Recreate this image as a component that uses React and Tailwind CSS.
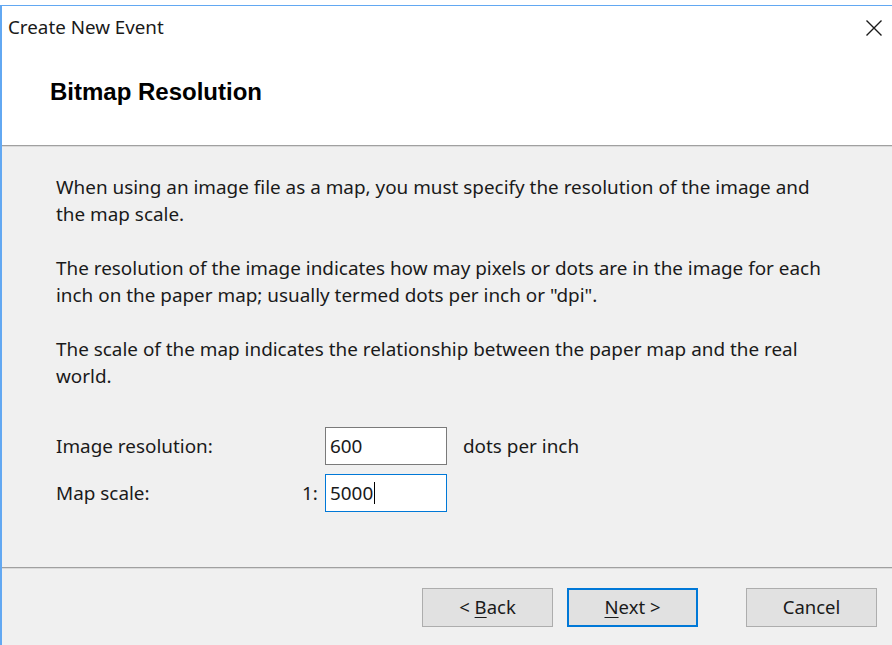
import React from "react";

const ui = { fontFamily: '"Noto Sans", "Open Sans", sans-serif' };
const heading = { fontFamily: '"Liberation Sans", Arial, sans-serif' };

function WizardButton({ children, primary }) {
  return (
    <button
      type="button"
      className={
        primary
          ? "h-[39px] w-[131px] bg-[#e1e1e1] border-2 border-[#0078d7] text-[18.5px] text-[#1a1a1a] leading-none flex items-center justify-center"
          : "h-[39px] w-[131px] bg-[#e1e1e1] border border-[#adadad] text-[18.5px] text-[#1a1a1a] leading-none flex items-center justify-center"
      }
      style={ui}
    >
      {children}
    </button>
  );
}

export default function App() {
  return (
    <div className="w-[892px] h-[645px] bg-white overflow-hidden flex flex-col" style={ui}>
      <div className="h-[5px] bg-white" />
      <div className="flex-1 flex flex-col border-t border-l-2 border-[#62a8f2] bg-[#f0f0f0] min-h-0">
        {/* title bar + page header */}
        <div className="bg-white h-[139px] flex flex-col">
          <div className="h-[43px] flex items-center justify-between pl-[6px] pr-[8px]">
            <span className="text-[18.8px] text-[#1a1a1a] leading-none">Create New Event</span>
            <svg width="18" height="18" viewBox="0 0 18 18" className="mr-[1px]">
              <path d="M1.5 1.5 L16.5 16.5 M16.5 1.5 L1.5 16.5" stroke="#1a1a1a" strokeWidth="1.4" fill="none" />
            </svg>
          </div>
          <div className="flex-1 flex items-center pl-[48px] pb-[10px]">
            <span className="text-[24px] font-bold text-black leading-none" style={heading}>
              Bitmap Resolution
            </span>
          </div>
        </div>
        <div className="border-t border-[#a0a0a0]" />
        <div className="border-t border-[#dadada]" />

        {/* body */}
        <div className="h-[420px] pl-[54px] pt-[27px] text-[18.9px] leading-[27px] text-[#1a1a1a] flex flex-col">
          <p>
            When using an image file as a map, you must specify the resolution of the image and
            <br />
            the map scale.
          </p>
          <p className="mt-[27px]">
            The resolution of the image indicates how may pixels or dots are in the image for each
            <br />
            inch on the paper map; usually termed dots per inch or "dpi".
          </p>
          <p className="mt-[27px]">
            The scale of the map indicates the relationship between the paper map and the real
            <br />
            world.
          </p>

          <div className="mt-[37px] flex flex-col gap-[9px]">
            <div className="flex items-center h-[38px]">
              <span className="w-[269px]">Image resolution:</span>
              <div className="w-[122px] h-[38px] bg-white border border-[#7a7a7a] flex items-center pl-[4px]">
                600
              </div>
              <span className="ml-[16px]">dots per inch</span>
            </div>
            <div className="flex items-center h-[38px]">
              <span className="w-[246px]">Map scale:</span>
              <span className="w-[23px]">1:</span>
              <div className="w-[122px] h-[38px] bg-white border border-[#0078d7] flex items-center pl-[4px]">
                5000
                <span className="inline-block w-[1px] h-[22px] bg-black ml-[1px]" />
              </div>
            </div>
          </div>
        </div>

        <div className="border-t border-[#a0a0a0]" />
        <div className="border-t border-[#dadada]" />

        {/* footer */}
        <div className="flex-1 flex items-start pt-[19px] pl-[420px]">
          <WizardButton>
            &lt;&nbsp;<span className="underline underline-offset-[3px]">B</span>ack
          </WizardButton>
          <div className="ml-[14px]">
            <WizardButton primary>
              <span className="underline underline-offset-[3px]">N</span>ext&nbsp;&gt;
            </WizardButton>
          </div>
          <div className="ml-[48px]">
            <WizardButton>Cancel</WizardButton>
          </div>
        </div>
      </div>
    </div>
  );
}
